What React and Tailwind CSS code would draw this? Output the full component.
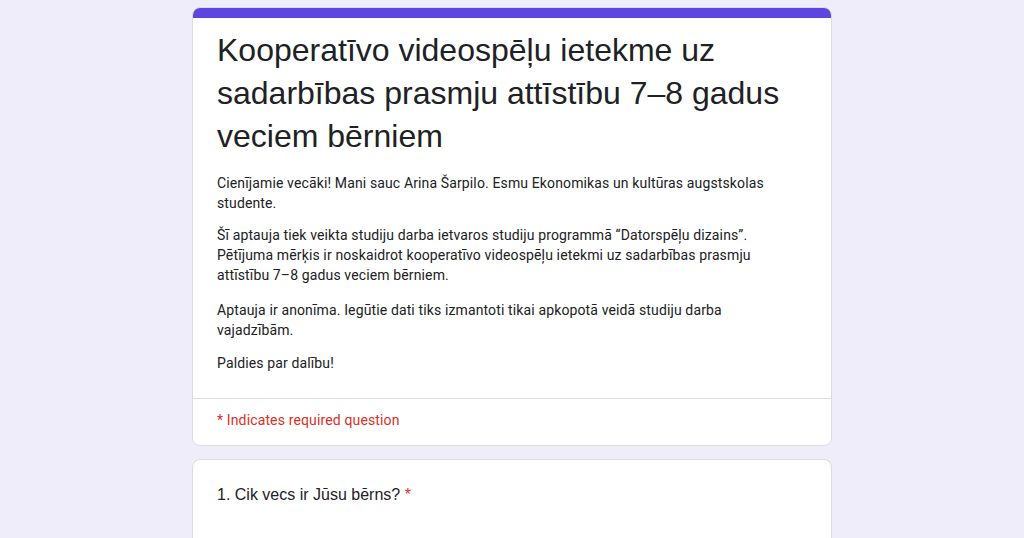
export default function App() {
  const body = "text-[14px] leading-[20px] tracking-[0.13px] text-[#202124]";
  return (
    <div className="min-h-[538px] w-full bg-[#efedf9] pt-[7px] pb-8" style={{ fontFamily: "Roboto, 'Noto Sans', sans-serif" }}>
      <div className="mx-auto flex w-[640px] flex-col gap-[13px]">
        <div className="overflow-hidden rounded-[8px] border border-[#dadce0] bg-white">
          <div className="h-[10px] bg-[#5b46e1]" />
          <div className="px-6 pt-[11px] pb-[25px]">
            <h1 className="text-[32px] leading-[43px] text-[#202124]" style={{ fontFamily: "'Liberation Sans', Arial, sans-serif" }}>
              Kooperatīvo videospēļu ietekme uz sadarbības prasmju attīstību 7–8 gadus veciem bērniem
            </h1>
            <div className="mt-[15px] flex w-[560px] flex-col">
              <p className={body}>Cienījamie vecāki! Mani sauc Arina Šarpilo. Esmu Ekonomikas un kultūras augstskolas studente.</p>
              <p className={`${body} mt-3`}>Šī aptauja tiek veikta studiju darba ietvaros studiju programmā “Datorspēļu dizains”. Pētījuma mērķis ir noskaidrot kooperatīvo videospēļu ietekmi uz sadarbības prasmju attīstību 7–8 gadus veciem bērniem.</p>
              <p className={`${body} mt-[15px]`}>Aptauja ir anonīma. Iegūtie dati tiks izmantoti tikai apkopotā veidā studiju darba vajadzībām.</p>
              <p className={`${body} mt-[13px]`}>Paldies par dalību!</p>
            </div>
          </div>
          <div className="border-t border-[#dadce0] px-6 pt-[11px] pb-[15px]">
            <p className="text-[14px] leading-[20px] tracking-[0.14px] text-[#d93025]">* Indicates required question</p>
          </div>
        </div>
        <div className="h-[120px] rounded-[8px] border border-[#dadce0] bg-white px-6 pt-[23px]">
          <p className="text-[16px] leading-[24px] text-[#202124]" style={{ fontFamily: "'Liberation Sans', Arial, sans-serif" }}>
            1. Cik vecs ir Jūsu bērns? <span className="text-[#d93025]">*</span>
          </p>
        </div>
      </div>
    </div>
  );
}
